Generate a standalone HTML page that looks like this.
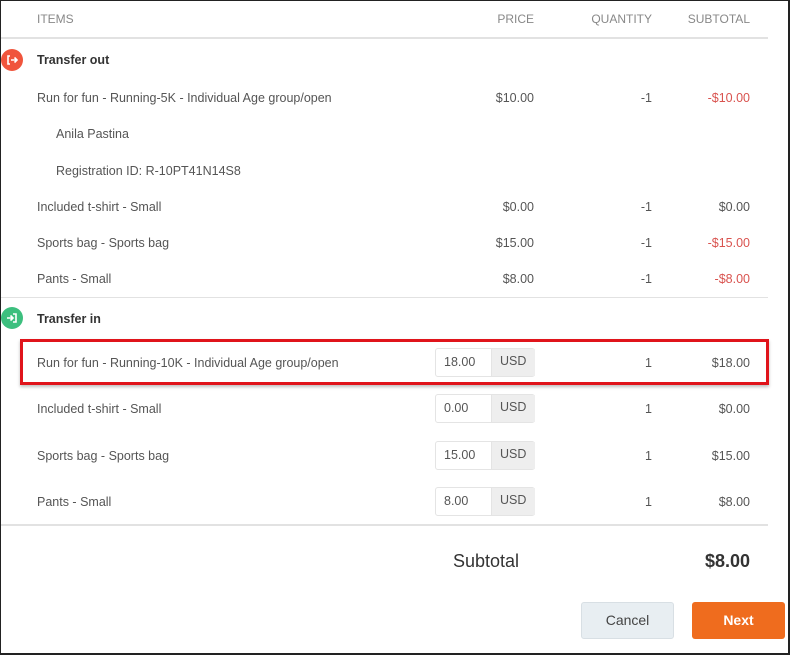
<!DOCTYPE html>
<html><head><meta charset="utf-8"><style>
*{margin:0;padding:0;box-sizing:border-box}
body{width:790px;height:655px;background:#fff;font-family:"Liberation Sans",sans-serif;color:#555;font-size:12.5px;position:relative;overflow:hidden}
.frame{position:absolute;left:0;top:0;width:790px;height:655px;border:1px solid #222;border-right:2px solid #222;border-bottom:2px solid #222}
.t{position:absolute;white-space:nowrap;line-height:16px}
.r{text-align:right}
.h{color:#888;font-size:12px}
.b{font-weight:bold;color:#333}
.red{color:#d9534f}
.line{position:absolute;left:1px;width:767px;height:2px;background:#e2e2e2}
.in{position:absolute;left:435px;width:100px;height:29px;border:1px solid #e4e4e4;border-radius:3px;background:#fff}
.in span{position:absolute;left:8px;top:6px}
.in i{font-style:normal;position:absolute;left:55px;top:0;width:44px;height:27px;background:#eee;border-left:1px solid #e4e4e4;padding:5px 0 0 8px}
.ic{position:absolute;left:1px;width:22px;height:22px;border-radius:11px}
</style></head><body>
<div class="frame"></div>
<div class="t h" style="left:37px;top:11px">ITEMS</div>
<div class="t h r" style="left:434px;width:100px;top:11px">PRICE</div>
<div class="t h r" style="left:552px;width:100px;top:11px">QUANTITY</div>
<div class="t h r" style="left:650px;width:100px;top:11px">SUBTOTAL</div>
<div class="line" style="top:37px"></div>

<div class="ic" style="top:49px;background:#f0543c"><svg width="22" height="22" viewBox="0 0 22 22"><path d="M9 7H7v8h2M10 11h6M13.5 8.5 16 11l-2.5 2.5" stroke="#fff" stroke-width="1.6" fill="none"/></svg></div>
<div class="t b" style="left:37px;top:52px">Transfer out</div>
<div class="t" style="left:37px;top:90px">Run for fun - Running-5K - Individual Age group/open</div>
<div class="t r" style="left:434px;width:100px;top:90px">$10.00</div>
<div class="t r" style="left:552px;width:100px;top:90px">-1</div>
<div class="t r red" style="left:650px;width:100px;top:90px">-$10.00</div>
<div class="t" style="left:56px;top:126px">Anila Pastina</div>
<div class="t" style="left:56px;top:163px">Registration ID: R-10PT41N14S8</div>
<div class="t" style="left:37px;top:199px">Included t-shirt - Small</div>
<div class="t r" style="left:434px;width:100px;top:199px">$0.00</div>
<div class="t r" style="left:552px;width:100px;top:199px">-1</div>
<div class="t r" style="left:650px;width:100px;top:199px">$0.00</div>
<div class="t" style="left:37px;top:235px">Sports bag - Sports bag</div>
<div class="t r" style="left:434px;width:100px;top:235px">$15.00</div>
<div class="t r" style="left:552px;width:100px;top:235px">-1</div>
<div class="t r red" style="left:650px;width:100px;top:235px">-$15.00</div>
<div class="t" style="left:37px;top:271px">Pants - Small</div>
<div class="t r" style="left:434px;width:100px;top:271px">$8.00</div>
<div class="t r" style="left:552px;width:100px;top:271px">-1</div>
<div class="t r red" style="left:650px;width:100px;top:271px">-$8.00</div>
<div class="line" style="top:297px;height:1px"></div>

<div class="ic" style="top:307px;background:#3cbf7e"><svg width="22" height="22" viewBox="0 0 22 22"><path d="M12 7h3v8h-3M6 11h6M9.5 8.5 12 11l-2.5 2.5" stroke="#fff" stroke-width="1.6" fill="none"/></svg></div>
<div class="t b" style="left:37px;top:311px">Transfer in</div>

<div style="position:absolute;left:20px;top:339px;width:749px;height:46px;border:3px solid #e0141b;box-shadow:0 2px 3px rgba(0,0,0,.25)"></div>
<div class="t" style="left:37px;top:355px">Run for fun - Running-10K - Individual Age group/open</div>
<div class="in" style="top:348px"><span>18.00</span><i>USD</i></div>
<div class="t r" style="left:552px;width:100px;top:355px">1</div>
<div class="t r" style="left:650px;width:100px;top:355px">$18.00</div>

<div class="t" style="left:37px;top:401px">Included t-shirt - Small</div>
<div class="in" style="top:394px"><span>0.00</span><i>USD</i></div>
<div class="t r" style="left:552px;width:100px;top:401px">1</div>
<div class="t r" style="left:650px;width:100px;top:401px">$0.00</div>

<div class="t" style="left:37px;top:448px">Sports bag - Sports bag</div>
<div class="in" style="top:441px"><span>15.00</span><i>USD</i></div>
<div class="t r" style="left:552px;width:100px;top:448px">1</div>
<div class="t r" style="left:650px;width:100px;top:448px">$15.00</div>

<div class="t" style="left:37px;top:494px">Pants - Small</div>
<div class="in" style="top:487px"><span>8.00</span><i>USD</i></div>
<div class="t r" style="left:552px;width:100px;top:494px">1</div>
<div class="t r" style="left:650px;width:100px;top:494px">$8.00</div>
<div class="line" style="top:524px"></div>

<div class="t" style="left:453px;top:551px;font-size:18px;line-height:20px;color:#333">Subtotal</div>
<div class="t r" style="left:650px;width:100px;top:551px;font-size:18px;line-height:20px;color:#333;font-weight:bold">$8.00</div>

<div style="position:absolute;left:581px;top:602px;width:93px;height:37px;background:#e8eef2;border:1px solid #d8dfe4;border-radius:3px;text-align:center;line-height:35px;font-size:14px;color:#444">Cancel</div>
<div style="position:absolute;left:692px;top:602px;width:93px;height:37px;background:#ef6c1e;border-radius:3px;text-align:center;line-height:37px;font-size:14px;color:#fff;font-weight:bold">Next</div>
</body></html>
